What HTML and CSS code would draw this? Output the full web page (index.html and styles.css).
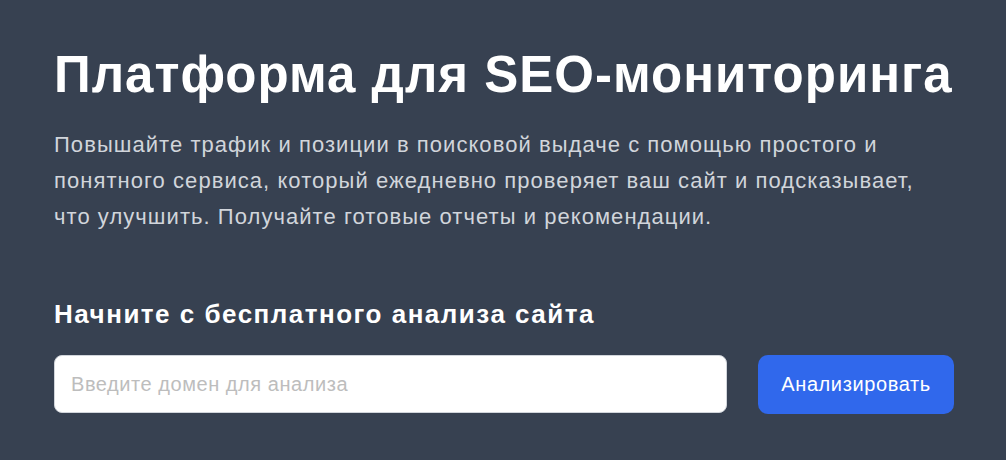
FILE: index.html
```html
<!DOCTYPE html>
<html lang="ru">
<head>
<meta charset="utf-8">
<link rel="stylesheet" href="styles.css">
</head>
<body>
<section class="hero">
  <h1 class="title">Платформа для SEO-мониторинга</h1>
  <p class="lead">Повышайте трафик и позиции в поисковой выдаче с помощью простого и понятного сервиса, который ежедневно проверяет ваш сайт и подсказывает, что улучшить. Получайте готовые отчеты и рекомендации.</p>
  <h2 class="subtitle">Начните с бесплатного анализа сайта</h2>
  <form class="form">
    <input class="field" type="text" placeholder="Введите домен для анализа">
    <button class="btn" type="button">Анализировать</button>
  </form>
</section>
</body>
</html>
```
FILE: styles.css
```css
html, body {
  margin: 0;
  padding: 0;
  background: #374151;
  height: 100%;
}
body {
  font-family: "Liberation Sans", Arial, sans-serif;
  overflow: hidden;
}
.hero {
  width: 900px;
  padding: 45px 0 0 54px;
}
.title {
  margin: 0;
  font-size: 51px;
  line-height: 60px;
  letter-spacing: 1px;
  font-weight: 700;
  color: #ffffff;
  white-space: nowrap;
}
.lead {
  margin: 22px 0 0;
  font-size: 22px;
  line-height: 36px;
  letter-spacing: 1.05px;
  color: #d1d5db;
}
.subtitle {
  margin: 63px 0 0;
  font-size: 26px;
  line-height: 32px;
  letter-spacing: 1.5px;
  font-weight: 700;
  color: #ffffff;
}
.form {
  display: flex;
  gap: 31px;
  margin-top: 25px;
}
.field {
  flex: 1;
  height: 58px;
  box-sizing: border-box;
  padding: 0 16px;
  border: 1px solid #d1d5db;
  border-radius: 8px;
  background: #ffffff;
  font-family: inherit;
  font-size: 20px;
  letter-spacing: 0.55px;
  color: #111827;
  outline: none;
}
.field::placeholder {
  color: #bdbdbd;
}
.btn {
  width: 196px;
  height: 59px;
  border: none;
  border-radius: 10px;
  background: #3068ec;
  color: #ffffff;
  font-family: inherit;
  font-size: 20px;
  letter-spacing: 0.6px;
  cursor: pointer;
}
```
